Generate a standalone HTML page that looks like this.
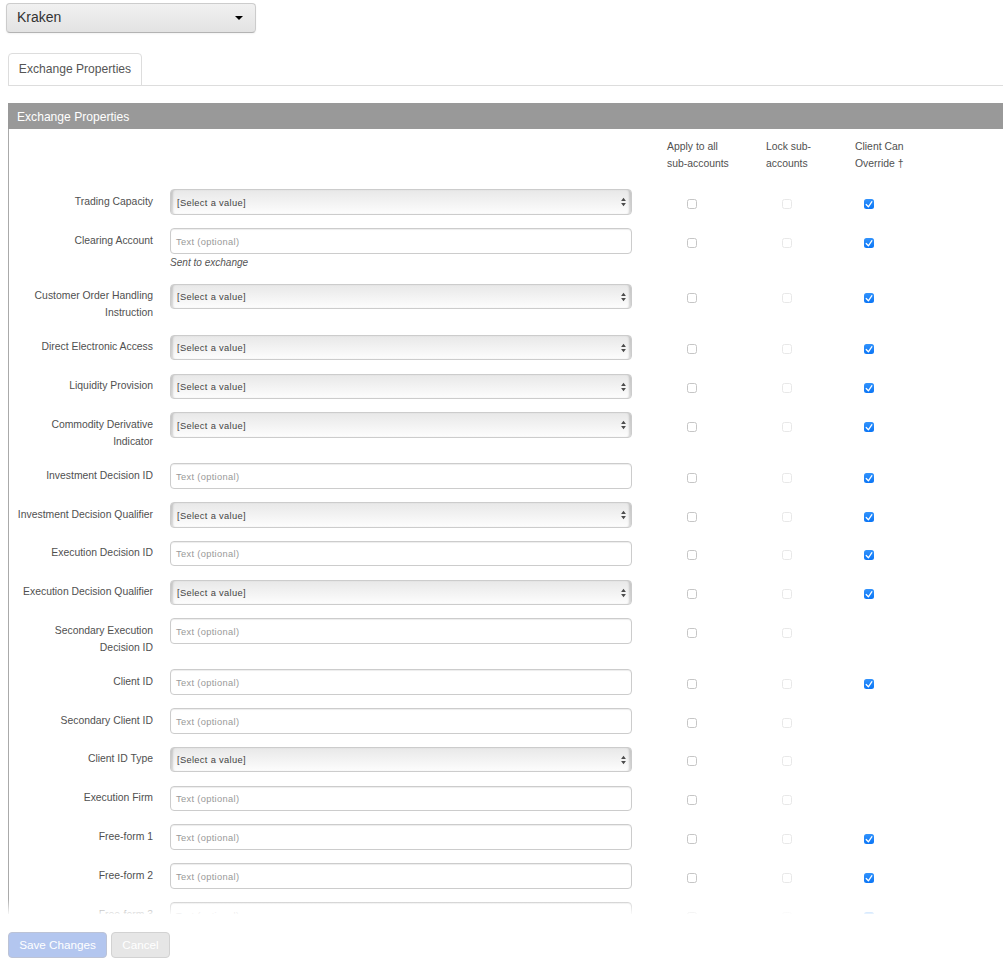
<!DOCTYPE html><html><head><meta charset="utf-8"><title>Exchange Properties</title><style>
*{box-sizing:border-box}
html,body{margin:0;padding:0;background:#fff}
body{width:1003px;height:974px;overflow:hidden;position:relative;font-family:"Liberation Sans",sans-serif;color:#333;font-size:11px}
.dd{position:absolute;left:6px;top:3px;width:250px;height:30px;border:1px solid #ccc;border-bottom-color:#b3b3b3;border-radius:4px;background:linear-gradient(#f1f1f1,#e3e3e3);box-shadow:0 1px 2px rgba(0,0,0,.05);font-size:14px;line-height:26px;padding-left:10px;color:#333}
.dd i{position:absolute;left:228px;top:12px;width:0;height:0;border-left:4px solid transparent;border-right:4px solid transparent;border-top:4px solid #000}
.tabline{position:absolute;left:8px;top:85px;width:995px;height:1px;background:#ddd}
.tab{position:absolute;left:8px;top:53px;width:134px;height:33px;border:1px solid #ddd;border-bottom-color:#ddd;border-radius:4px 4px 0 0;background:#fff;font-size:12.1px;line-height:31px;text-align:center;color:#555}
.ph{position:absolute;left:8px;top:103px;width:995px;height:26px;background:#999;color:#fff;font-size:12.1px;line-height:28px;padding-left:9px}
.pb{position:absolute;left:8px;top:129px;width:995px;height:785px;border-left:1px solid #aaa;overflow:hidden}
.ch{position:absolute;top:138px;font-size:10.4px;line-height:17px;color:#505050}
.lb{display:block;position:absolute;left:0;width:153px;text-align:right;font-size:10.4px;line-height:17px;color:#505050}
.sel{position:absolute;left:170px;width:462px;height:26px;border:1px solid #ccc;border-radius:4px;background:linear-gradient(#e8e8e8,#fdfdfd);font-size:9.3px;letter-spacing:.33px;line-height:27px;padding-left:6px;color:#444;box-shadow:inset 3px 0 2px -1px rgba(0,0,0,.16),inset -3px 0 2px -1px rgba(0,0,0,.16)}
.sel svg{position:absolute;left:448px;top:5px}
.inp{position:absolute;left:170px;width:462px;height:26px;border:1px solid #ccc;border-radius:4px;background:#fff;font-size:9.3px;letter-spacing:.33px;line-height:27px;padding-left:5px;color:#999;box-shadow:inset 0 1px 1px rgba(0,0,0,.075)}
.hp{position:absolute;left:170px;font-size:10.05px;font-style:italic;color:#555;line-height:14px}
.cb{position:absolute;width:10px;height:10px;border:1px solid #c6c6c6;border-radius:2.5px;background:#fff}
.cb.d{border-color:#e8e8e8}
.cb.k{border:0;background:linear-gradient(#3293fc,#0a75f6)}
.cb.k svg{position:absolute;left:0;top:0}
.fade{position:absolute;left:0;top:899px;width:1003px;height:15px;background:linear-gradient(rgba(255,255,255,0),rgba(255,255,255,.9))}
.btn{margin:0;padding:0;font-family:inherit;display:block;position:absolute;top:932px;height:26px;border-radius:4px;font-size:11.7px;line-height:24px;text-align:center;color:#fff}
.b1{left:8px;width:99px;background:#b3c6ef;border:1px solid #bcc3d6}
.b2{left:111px;width:59px;background:#e6e6e6;border:1px solid #d2d2d2}
</style></head><body>
<div class="dd">Kraken<i></i></div>
<div class="tabline"></div><div class="tab">Exchange Properties</div>
<div class="ph">Exchange Properties</div><div class="pb"></div>
<div class="ch" style="left:667px">Apply to all<br>sub-accounts</div>
<div class="ch" style="left:766px">Lock sub-<br>accounts</div>
<div class="ch" style="left:855px">Client Can<br>Override †</div>
<label class="lb" style="top:193px">Trading Capacity</label>
<div class="sel" style="top:189px;height:26px">[Select a value]<svg width="10" height="14" viewBox="0 0 10 14"><path d="M4.5 2.7 L6.9 6 L2.1 6 Z M2.1 8 L6.9 8 L4.5 11.3 Z" fill="#4c4c4c"/></svg></div>
<div class="cb" style="left:687px;top:199px"></div>
<div class="cb d" style="left:782px;top:199px"></div>
<div class="cb k" style="left:864px;top:199px"><svg width="10" height="10" viewBox="0 0 10 10"><path d="M2.2 5.5 L4.4 7.8 L7.9 2.7" fill="none" stroke="#fff" stroke-width="1.25" stroke-linecap="round" stroke-linejoin="round"/></svg></div>
<label class="lb" style="top:232px">Clearing Account</label>
<div class="inp" style="top:228px;height:26px">Text (optional)</div>
<div class="hp" style="top:256px">Sent to exchange</div>
<div class="cb" style="left:687px;top:238px"></div>
<div class="cb d" style="left:782px;top:238px"></div>
<div class="cb k" style="left:864px;top:238px"><svg width="10" height="10" viewBox="0 0 10 10"><path d="M2.2 5.5 L4.4 7.8 L7.9 2.7" fill="none" stroke="#fff" stroke-width="1.25" stroke-linecap="round" stroke-linejoin="round"/></svg></div>
<label class="lb" style="top:287px">Customer Order Handling<br>Instruction</label>
<div class="sel" style="top:284px;height:25px;line-height:25px">[Select a value]<svg width="10" height="14" viewBox="0 0 10 14"><path d="M4.5 2.7 L6.9 6 L2.1 6 Z M2.1 8 L6.9 8 L4.5 11.3 Z" fill="#4c4c4c"/></svg></div>
<div class="cb" style="left:687px;top:293px"></div>
<div class="cb d" style="left:782px;top:293px"></div>
<div class="cb k" style="left:864px;top:293px"><svg width="10" height="10" viewBox="0 0 10 10"><path d="M2.2 5.5 L4.4 7.8 L7.9 2.7" fill="none" stroke="#fff" stroke-width="1.25" stroke-linecap="round" stroke-linejoin="round"/></svg></div>
<label class="lb" style="top:338px">Direct Electronic Access</label>
<div class="sel" style="top:335px;height:25px;line-height:25px">[Select a value]<svg width="10" height="14" viewBox="0 0 10 14"><path d="M4.5 2.7 L6.9 6 L2.1 6 Z M2.1 8 L6.9 8 L4.5 11.3 Z" fill="#4c4c4c"/></svg></div>
<div class="cb" style="left:687px;top:344px"></div>
<div class="cb d" style="left:782px;top:344px"></div>
<div class="cb k" style="left:864px;top:344px"><svg width="10" height="10" viewBox="0 0 10 10"><path d="M2.2 5.5 L4.4 7.8 L7.9 2.7" fill="none" stroke="#fff" stroke-width="1.25" stroke-linecap="round" stroke-linejoin="round"/></svg></div>
<label class="lb" style="top:377px">Liquidity Provision</label>
<div class="sel" style="top:374px;height:25px;line-height:25px">[Select a value]<svg width="10" height="14" viewBox="0 0 10 14"><path d="M4.5 2.7 L6.9 6 L2.1 6 Z M2.1 8 L6.9 8 L4.5 11.3 Z" fill="#4c4c4c"/></svg></div>
<div class="cb" style="left:687px;top:383px"></div>
<div class="cb d" style="left:782px;top:383px"></div>
<div class="cb k" style="left:864px;top:383px"><svg width="10" height="10" viewBox="0 0 10 10"><path d="M2.2 5.5 L4.4 7.8 L7.9 2.7" fill="none" stroke="#fff" stroke-width="1.25" stroke-linecap="round" stroke-linejoin="round"/></svg></div>
<label class="lb" style="top:416px">Commodity Derivative<br>Indicator</label>
<div class="sel" style="top:412px;height:26px">[Select a value]<svg width="10" height="14" viewBox="0 0 10 14"><path d="M4.5 2.7 L6.9 6 L2.1 6 Z M2.1 8 L6.9 8 L4.5 11.3 Z" fill="#4c4c4c"/></svg></div>
<div class="cb" style="left:687px;top:422px"></div>
<div class="cb d" style="left:782px;top:422px"></div>
<div class="cb k" style="left:864px;top:422px"><svg width="10" height="10" viewBox="0 0 10 10"><path d="M2.2 5.5 L4.4 7.8 L7.9 2.7" fill="none" stroke="#fff" stroke-width="1.25" stroke-linecap="round" stroke-linejoin="round"/></svg></div>
<label class="lb" style="top:467px">Investment Decision ID</label>
<div class="inp" style="top:463px;height:26px">Text (optional)</div>
<div class="cb" style="left:687px;top:473px"></div>
<div class="cb d" style="left:782px;top:473px"></div>
<div class="cb k" style="left:864px;top:473px"><svg width="10" height="10" viewBox="0 0 10 10"><path d="M2.2 5.5 L4.4 7.8 L7.9 2.7" fill="none" stroke="#fff" stroke-width="1.25" stroke-linecap="round" stroke-linejoin="round"/></svg></div>
<label class="lb" style="top:506px">Investment Decision Qualifier</label>
<div class="sel" style="top:502px;height:26px">[Select a value]<svg width="10" height="14" viewBox="0 0 10 14"><path d="M4.5 2.7 L6.9 6 L2.1 6 Z M2.1 8 L6.9 8 L4.5 11.3 Z" fill="#4c4c4c"/></svg></div>
<div class="cb" style="left:687px;top:512px"></div>
<div class="cb d" style="left:782px;top:512px"></div>
<div class="cb k" style="left:864px;top:512px"><svg width="10" height="10" viewBox="0 0 10 10"><path d="M2.2 5.5 L4.4 7.8 L7.9 2.7" fill="none" stroke="#fff" stroke-width="1.25" stroke-linecap="round" stroke-linejoin="round"/></svg></div>
<label class="lb" style="top:544px">Execution Decision ID</label>
<div class="inp" style="top:541px;height:25px;line-height:25px">Text (optional)</div>
<div class="cb" style="left:687px;top:550px"></div>
<div class="cb d" style="left:782px;top:550px"></div>
<div class="cb k" style="left:864px;top:550px"><svg width="10" height="10" viewBox="0 0 10 10"><path d="M2.2 5.5 L4.4 7.8 L7.9 2.7" fill="none" stroke="#fff" stroke-width="1.25" stroke-linecap="round" stroke-linejoin="round"/></svg></div>
<label class="lb" style="top:583px">Execution Decision Qualifier</label>
<div class="sel" style="top:580px;height:25px;line-height:25px">[Select a value]<svg width="10" height="14" viewBox="0 0 10 14"><path d="M4.5 2.7 L6.9 6 L2.1 6 Z M2.1 8 L6.9 8 L4.5 11.3 Z" fill="#4c4c4c"/></svg></div>
<div class="cb" style="left:687px;top:589px"></div>
<div class="cb d" style="left:782px;top:589px"></div>
<div class="cb k" style="left:864px;top:589px"><svg width="10" height="10" viewBox="0 0 10 10"><path d="M2.2 5.5 L4.4 7.8 L7.9 2.7" fill="none" stroke="#fff" stroke-width="1.25" stroke-linecap="round" stroke-linejoin="round"/></svg></div>
<label class="lb" style="top:622px">Secondary Execution<br>Decision ID</label>
<div class="inp" style="top:618px;height:26px">Text (optional)</div>
<div class="cb" style="left:687px;top:628px"></div>
<div class="cb d" style="left:782px;top:628px"></div>
<label class="lb" style="top:673px">Client ID</label>
<div class="inp" style="top:669px;height:26px">Text (optional)</div>
<div class="cb" style="left:687px;top:679px"></div>
<div class="cb d" style="left:782px;top:679px"></div>
<div class="cb k" style="left:864px;top:679px"><svg width="10" height="10" viewBox="0 0 10 10"><path d="M2.2 5.5 L4.4 7.8 L7.9 2.7" fill="none" stroke="#fff" stroke-width="1.25" stroke-linecap="round" stroke-linejoin="round"/></svg></div>
<label class="lb" style="top:712px">Secondary Client ID</label>
<div class="inp" style="top:708px;height:26px">Text (optional)</div>
<div class="cb" style="left:687px;top:718px"></div>
<div class="cb d" style="left:782px;top:718px"></div>
<label class="lb" style="top:750px">Client ID Type</label>
<div class="sel" style="top:747px;height:25px;line-height:25px">[Select a value]<svg width="10" height="14" viewBox="0 0 10 14"><path d="M4.5 2.7 L6.9 6 L2.1 6 Z M2.1 8 L6.9 8 L4.5 11.3 Z" fill="#4c4c4c"/></svg></div>
<div class="cb" style="left:687px;top:756px"></div>
<div class="cb d" style="left:782px;top:756px"></div>
<label class="lb" style="top:789px">Execution Firm</label>
<div class="inp" style="top:786px;height:25px;line-height:25px">Text (optional)</div>
<div class="cb" style="left:687px;top:795px"></div>
<div class="cb d" style="left:782px;top:795px"></div>
<label class="lb" style="top:828px">Free-form 1</label>
<div class="inp" style="top:824px;height:26px">Text (optional)</div>
<div class="cb" style="left:687px;top:834px"></div>
<div class="cb d" style="left:782px;top:834px"></div>
<div class="cb k" style="left:864px;top:834px"><svg width="10" height="10" viewBox="0 0 10 10"><path d="M2.2 5.5 L4.4 7.8 L7.9 2.7" fill="none" stroke="#fff" stroke-width="1.25" stroke-linecap="round" stroke-linejoin="round"/></svg></div>
<label class="lb" style="top:867px">Free-form 2</label>
<div class="inp" style="top:863px;height:26px">Text (optional)</div>
<div class="cb" style="left:687px;top:873px"></div>
<div class="cb d" style="left:782px;top:873px"></div>
<div class="cb k" style="left:864px;top:873px"><svg width="10" height="10" viewBox="0 0 10 10"><path d="M2.2 5.5 L4.4 7.8 L7.9 2.7" fill="none" stroke="#fff" stroke-width="1.25" stroke-linecap="round" stroke-linejoin="round"/></svg></div>
<label class="lb" style="top:906px">Free-form 3</label>
<div class="inp" style="top:902px;height:26px">Text (optional)</div>
<div class="cb" style="left:687px;top:912px"></div>
<div class="cb d" style="left:782px;top:912px"></div>
<div class="cb k" style="left:864px;top:912px"><svg width="10" height="10" viewBox="0 0 10 10"><path d="M2.2 5.5 L4.4 7.8 L7.9 2.7" fill="none" stroke="#fff" stroke-width="1.25" stroke-linecap="round" stroke-linejoin="round"/></svg></div>
<div class="fade"></div>
<div style="position:absolute;left:0;top:914px;width:1003px;height:60px;background:#fff"></div>
<button type="button" class="btn b1" disabled>Save Changes</button><button type="button" class="btn b2" disabled>Cancel</button>
</body></html>
